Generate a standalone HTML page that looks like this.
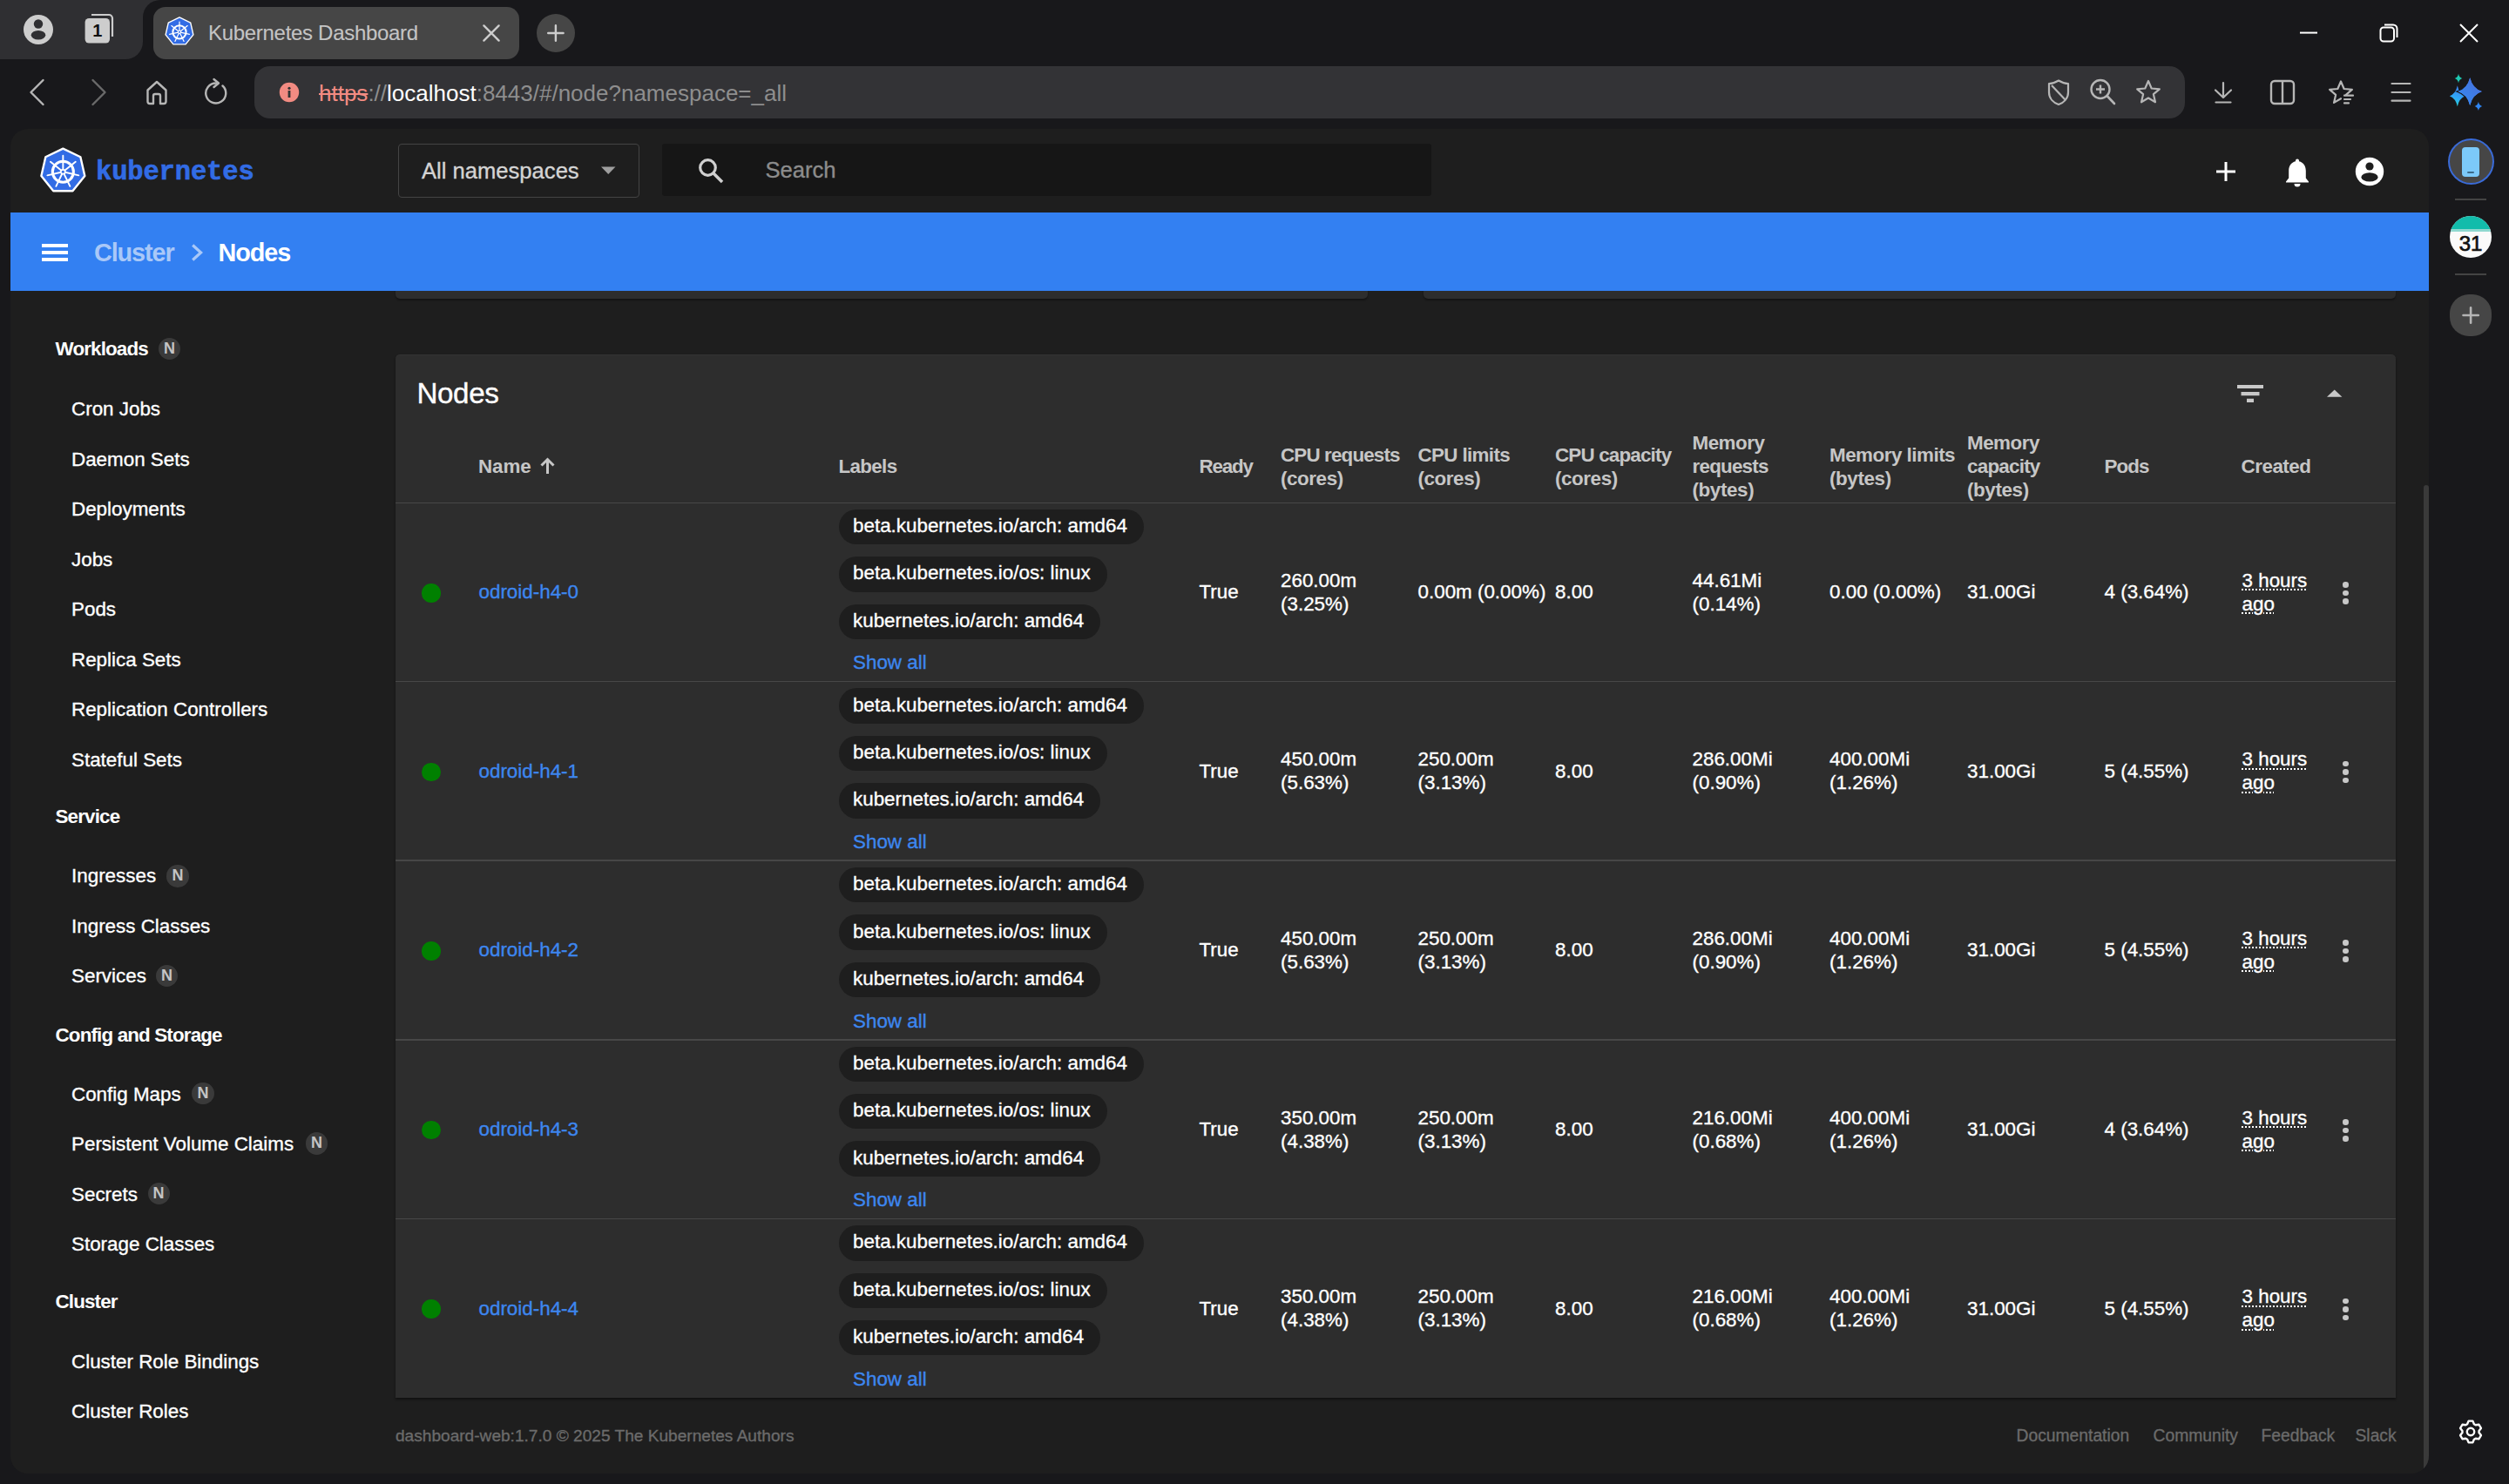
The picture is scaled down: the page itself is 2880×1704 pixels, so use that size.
<!DOCTYPE html>
<html><head><meta charset="utf-8"><title>Kubernetes Dashboard</title>
<style>
html,body{margin:0;padding:0;width:2880px;height:1704px;overflow:hidden;background:#18181b;}
body{position:relative;font-family:'Liberation Sans', sans-serif;}
.t{position:absolute;white-space:pre;line-height:1;}
.r{position:absolute;display:block;}
</style></head><body>
<div class="r" style="left:0.0px;top:0.0px;width:164.0px;height:68.0px;background:#2f2f32;border-bottom-right-radius:20px"></div>
<div class="r" style="left:150.0px;top:0.0px;width:40.0px;height:24.0px;background:#2f2f32;"></div>
<div class="r" style="left:164.0px;top:0.0px;width:60.0px;height:48.0px;background:#18181b;border-top-left-radius:20px"></div>
<svg class="r" style="left:26.0px;top:16.0px;" width="36" height="36" viewBox="0 0 36 36"><circle cx="18" cy="18" r="17" fill="#cdcdcd"/><circle cx="18" cy="11.5" r="5.2" fill="#2f2f32"/><ellipse cx="18" cy="24.3" rx="8.3" ry="5.2" fill="#2f2f32"/></svg>
<svg class="r" style="left:94.0px;top:12.0px;" width="40" height="40" viewBox="0 0 40 40"><path d="M11 5 H31 a4 4 0 0 1 4 4 V30" fill="none" stroke="#cdcdcd" stroke-width="2.2"/><rect x="3.6" y="9" width="28.4" height="28.5" rx="4.5" fill="#cdcdcd"/><text x="17.8" y="30.2" text-anchor="middle" font-family="Liberation Sans" style="font-weight:bold" font-size="20" fill="#111">1</text></svg>
<div class="r" style="left:176.0px;top:8.0px;width:420.0px;height:60.0px;background:#464646;border-radius:14px"></div>
<svg class="r" style="left:186.0px;top:16.0px;" width="40" height="40" viewBox="0 0 40 40"><path d="M20.00 3.90 L32.74 10.04 L35.89 23.83 L27.07 34.89 L12.93 34.89 L4.11 23.83 L7.26 10.04Z" fill="#326ce5" stroke="#fff" stroke-width="1.4" stroke-linejoin="round"/><circle cx="20.00" cy="20.85" r="7.66" fill="none" stroke="#fff" stroke-width="1.96"/><line x1="20.00" y1="20.85" x2="20.00" y2="9.12" stroke="#fff" stroke-width="1.22" stroke-linecap="round"/><line x1="20.00" y1="20.85" x2="29.18" y2="13.53" stroke="#fff" stroke-width="1.22" stroke-linecap="round"/><line x1="20.00" y1="20.85" x2="31.44" y2="23.46" stroke="#fff" stroke-width="1.22" stroke-linecap="round"/><line x1="20.00" y1="20.85" x2="25.09" y2="31.43" stroke="#fff" stroke-width="1.22" stroke-linecap="round"/><line x1="20.00" y1="20.85" x2="14.91" y2="31.43" stroke="#fff" stroke-width="1.22" stroke-linecap="round"/><line x1="20.00" y1="20.85" x2="8.56" y2="23.46" stroke="#fff" stroke-width="1.22" stroke-linecap="round"/><line x1="20.00" y1="20.85" x2="10.82" y2="13.53" stroke="#fff" stroke-width="1.22" stroke-linecap="round"/><circle cx="20.00" cy="20.85" r="2.12" fill="#fff"/><circle cx="20.00" cy="20.85" r="0.98" fill="#326ce5"/></svg>
<div class="t" style="left:239.0px;top:26.3px;font-size:24px;font-weight:400;color:#c4c4c4;letter-spacing:-0.3px;font-family:'Liberation Sans', sans-serif;-webkit-text-stroke-width:0.1px">Kubernetes Dashboard</div>
<svg class="r" style="left:550.0px;top:24.0px;" width="28" height="28" viewBox="0 0 28 28"><path d="M5.4 5.4 L22.6 22.6 M22.6 5.4 L5.4 22.6" stroke="#cccccc" stroke-width="2.4" stroke-linecap="round"/></svg>
<div class="r" style="left:615.5px;top:15.5px;width:44.8px;height:44.8px;background:#464646;border-radius:50%"></div>
<svg class="r" style="left:624.0px;top:24.0px;" width="28" height="28" viewBox="0 0 28 28"><path d="M13.9 5.2 V22.8 M5.2 14 H22.6" stroke="#cccccc" stroke-width="2.4" stroke-linecap="round"/></svg>
<svg class="r" style="left:2636.0px;top:30.0px;" width="28" height="16" viewBox="0 0 28 16"><path d="M4 7.6 H24" stroke="#fff" stroke-width="2"/></svg>
<svg class="r" style="left:2728.0px;top:24.0px;" width="28" height="28" viewBox="0 0 28 28"><rect x="4.5" y="7.5" width="15.5" height="16" rx="3.5" fill="none" stroke="#fff" stroke-width="2"/><path d="M9 4.5 H19 a4.5 4.5 0 0 1 4.5 4.5 V19" fill="none" stroke="#fff" stroke-width="2"/></svg>
<svg class="r" style="left:2820.0px;top:24.0px;" width="28" height="28" viewBox="0 0 28 28"><path d="M4 4 L24 24 M24 4 L4 24" stroke="#fff" stroke-width="2"/></svg>
<svg class="r" style="left:30.0px;top:88.0px;" width="26" height="36" viewBox="0 0 26 36"><path d="M19.5 4 L5.5 18 L19.5 32" fill="none" stroke="#b6b6b6" stroke-width="2.4" stroke-linecap="round" stroke-linejoin="round"/></svg>
<svg class="r" style="left:101.0px;top:88.0px;" width="26" height="36" viewBox="0 0 26 36"><path d="M5.5 4 L19.5 18 L5.5 32" fill="none" stroke="#6a6a6a" stroke-width="2.4" stroke-linecap="round" stroke-linejoin="round"/></svg>
<svg class="r" style="left:164.0px;top:89.0px;" width="32" height="34" viewBox="0 0 32 34"><path d="M5.5 14.5 L16 5 L26.5 14.5 V27.5 a2.5 2.5 0 0 1 -2.5 2.5 H20 V21 a2 2 0 0 0 -2 -2 H14 a2 2 0 0 0 -2 2 V30 H8 a2.5 2.5 0 0 1 -2.5 -2.5 Z" fill="none" stroke="#b6b6b6" stroke-width="2.4" stroke-linejoin="round"/></svg>
<svg class="r" style="left:230.0px;top:87.5px;" width="36" height="36" viewBox="0 0 36 36"><path d="M25.5 10.5 A11.5 11.5 0 1 1 18 7.5" fill="none" stroke="#b6b6b6" stroke-width="2.4" stroke-linecap="round"/><path d="M15.5 3 L21 7.5 L15.5 12" fill="none" stroke="#b6b6b6" stroke-width="2.4" stroke-linecap="round" stroke-linejoin="round"/></svg>
<div class="r" style="left:292.0px;top:76.0px;width:2216.0px;height:60.0px;background:#333336;border-radius:18px"></div>
<svg class="r" style="left:320.0px;top:94.0px;" width="24" height="24" viewBox="0 0 24 24"><circle cx="12" cy="12" r="11.2" fill="#f28b82"/><circle cx="12" cy="7.3" r="1.6" fill="#333"/><rect x="10.6" y="10" width="2.8" height="8" fill="#333"/></svg>
<div class="t" style="left:366px;top:94.3px;font-size:26px;color:#8e8e8e"><span style="color:#f28b82;text-decoration:line-through;text-decoration-thickness:2px">https</span>://<span style="color:#fff">localhost</span>:8443/#/node?namespace=_all</div>
<svg class="r" style="left:2346.0px;top:88.0px;" width="34" height="36" viewBox="0 0 34 36"><path d="M17 4.5 C12 7.5 8.5 8 6 8 V18 C6 25 11 30 17 32 C23 30 28 25 28 18 V8 C25.5 8 22 7.5 17 4.5 Z" fill="none" stroke="#b6b6b6" stroke-width="2.2" stroke-linejoin="round"/><path d="M9 10 L25 27" stroke="#b6b6b6" stroke-width="2.2"/></svg>
<svg class="r" style="left:2396.0px;top:88.0px;" width="36" height="36" viewBox="0 0 36 36"><circle cx="15" cy="14.5" r="10.5" fill="none" stroke="#b6b6b6" stroke-width="2.4"/><path d="M22.5 22 L31 31" stroke="#b6b6b6" stroke-width="2.6" stroke-linecap="round"/><path d="M15 9.5 V19.5 M10 14.5 H20" stroke="#b6b6b6" stroke-width="2.4"/></svg>
<svg class="r" style="left:2448.0px;top:88.0px;" width="36" height="36" viewBox="0 0 36 36"><path d="M18 5 L21.7 13.5 L30.8 14.3 L23.9 20.2 L26 29.3 L18 24.5 L10 29.3 L12.1 20.2 L5.2 14.3 L14.3 13.5 Z" fill="none" stroke="#b6b6b6" stroke-width="2.2" stroke-linejoin="round"/></svg>
<svg class="r" style="left:2536.0px;top:90.0px;" width="32" height="32" viewBox="0 0 32 32"><path d="M16 5 V21 M7 13.5 L16 22 L25 13.5" fill="none" stroke="#b6b6b6" stroke-width="2.2" stroke-linecap="round" stroke-linejoin="round"/><path d="M7.5 27.5 H24.5" stroke="#b6b6b6" stroke-width="2.2" stroke-linecap="round"/></svg>
<svg class="r" style="left:2602.0px;top:88.0px;" width="36" height="36" viewBox="0 0 36 36"><rect x="5" y="5" width="26" height="26" rx="4" fill="none" stroke="#b6b6b6" stroke-width="2.4"/><path d="M18 5 V31" stroke="#b6b6b6" stroke-width="2.4"/></svg>
<svg class="r" style="left:2670.0px;top:88.0px;" width="36" height="36" viewBox="0 0 36 36"><path d="M17.00 25.20 L9.06 29.92 L11.10 20.92 L4.16 14.83 L13.36 13.98 L17.00 5.50 L20.64 13.98 L29.84 14.83 L22.90 20.92" fill="none" stroke="#b6b6b6" stroke-width="2.2" stroke-linejoin="round" stroke-linecap="round"/><path d="M21 21.7 H31 M21 26 H28 M21 30.4 H26" stroke="#b6b6b6" stroke-width="2.2" stroke-linecap="round"/></svg>
<svg class="r" style="left:2740.0px;top:90.0px;" width="32" height="32" viewBox="0 0 32 32"><path d="M5.5 6 H26.5 M5.5 16 H26.5 M5.5 25.7 H26.5" stroke="#b6b6b6" stroke-width="2.2" stroke-linecap="round"/></svg>
<svg class="r" style="left:2806.0px;top:80.0px;" width="50" height="50" viewBox="0 0 50 50"><defs><linearGradient id="cg1" x1="0" y1="1" x2="0.3" y2="0"><stop offset="0" stop-color="#22e0c8"/><stop offset="0.5" stop-color="#2fa8f8"/><stop offset="1" stop-color="#3b82f0"/></linearGradient><linearGradient id="cg2" x1="0" y1="1" x2="1" y2="0"><stop offset="0" stop-color="#338cf5"/><stop offset="1" stop-color="#4a6cd8"/></linearGradient></defs><path d="M14.80 18.20 Q16.78 27.56 23.80 30.20 Q16.78 32.84 14.80 42.20 Q12.82 32.84 5.80 30.20 Q12.82 27.56 14.80 18.20Z" fill="url(#cg1)"/><path d="M29.20 9.20 Q32.21 21.60 42.90 25.10 Q32.21 28.60 29.20 41.00 Q26.19 28.60 15.50 25.10 Q26.19 21.60 29.20 9.20Z" fill="url(#cg2)" stroke="#18181b" stroke-width="2.2" paint-order="stroke"/><path d="M29.20 9.20 Q32.21 21.60 42.90 25.10 Q32.21 28.60 29.20 41.00 Q26.19 28.60 15.50 25.10 Q26.19 21.60 29.20 9.20Z" fill="url(#cg2)"/><path d="M16.00 4.80 Q16.86 8.96 20.30 10.00 Q16.86 11.04 16.00 15.20 Q15.14 11.04 11.70 10.00 Q15.14 8.96 16.00 4.80Z" fill="#1fc9b3"/><path d="M38.90 36.70 Q39.76 40.86 43.20 41.90 Q39.76 42.94 38.90 47.10 Q38.04 42.94 34.60 41.90 Q38.04 40.86 38.90 36.70Z" fill="#2f86f5"/></svg>
<div class="r" style="left:2811.5px;top:161.0px;width:49.0px;height:49.0px;background:#464646;border-radius:50%;box-shadow:0 0 0 2px #3a6bd8"></div>
<div class="r" style="left:2826.0px;top:169.0px;width:19.6px;height:33.8px;background:#7cc9f9;border-radius:4px"></div>
<div class="r" style="left:2832.0px;top:197.0px;width:8.0px;height:2.0px;background:#3b6a8a;border-radius:1px"></div>
<div class="r" style="left:2818.0px;top:228.0px;width:36.0px;height:2.0px;background:#444;"></div>
<div class="r" style="left:2812px;top:248px;width:48px;height:48px;border-radius:50%;overflow:hidden;background:#fafafa"><div style="position:absolute;left:0;top:0;width:48px;height:15px;background:#12bcab"></div><div style="position:absolute;left:0;top:15px;width:48px;height:3px;background:#8fd8d0"></div><div style="position:absolute;left:0;top:19.5px;width:48px;text-align:center;font-family:'Liberation Sans';font-weight:400;font-size:24px;line-height:24px;color:#111;letter-spacing:0px;-webkit-text-stroke:0.7px #111">31</div></div>
<div class="r" style="left:2818.0px;top:314.0px;width:36.0px;height:2.0px;background:#444;"></div>
<div class="r" style="left:2812.0px;top:338.0px;width:48.0px;height:48.0px;background:#464646;border-radius:22px"></div>
<svg class="r" style="left:2822.0px;top:348.0px;" width="28" height="28" viewBox="0 0 28 28"><path d="M14.1 5.3 V22.7 M5.5 14 H22.8" stroke="#b4b4b4" stroke-width="2.6" stroke-linecap="round"/></svg>
<svg class="r" style="left:2818.0px;top:1626.0px;" width="36" height="36" viewBox="0 0 36 36"><path d="M14.10 9.23 L15.60 5.63 L20.40 5.63 L21.90 9.23 L23.64 10.23 L27.51 9.73 L29.91 13.90 L27.55 17.00 L27.55 19.00 L29.91 22.10 L27.51 26.27 L23.64 25.77 L21.90 26.77 L20.40 30.37 L15.60 30.37 L14.10 26.77 L12.36 25.77 L8.49 26.27 L6.09 22.10 L8.45 19.00 L8.45 17.00 L6.09 13.90 L8.49 9.73 L12.36 10.23Z" fill="none" stroke="#fff" stroke-width="2.4" stroke-linejoin="round"/><circle cx="18" cy="18" r="4.2" fill="none" stroke="#fff" stroke-width="2.4"/></svg>
<div class="r" style="left:12.0px;top:148.0px;width:2776.0px;height:1544.0px;background:#1e1e1e;border-radius:20px"></div>
<div class="r" style="left:2748px;top:540px;width:40px;height:1152px;overflow:hidden;border-bottom-right-radius:20px"><div style="position:absolute;left:34px;top:17px;width:6px;height:1200px;background:#3a3a3a;border-radius:3px 3px 0 0"></div></div>
<svg class="r" style="left:42.0px;top:165.0px;" width="62" height="62" viewBox="0 0 62 62"><path d="M30.35 5.60 L50.36 15.24 L55.31 36.90 L41.46 54.26 L19.24 54.26 L5.39 36.90 L10.34 15.24Z" fill="#326ce5" stroke="#fff" stroke-width="2.4" stroke-linejoin="round"/><circle cx="30.35" cy="32.22" r="12.03" fill="none" stroke="#fff" stroke-width="3.07"/><line x1="30.35" y1="32.22" x2="30.35" y2="13.79" stroke="#fff" stroke-width="1.92" stroke-linecap="round"/><line x1="30.35" y1="32.22" x2="44.76" y2="20.73" stroke="#fff" stroke-width="1.92" stroke-linecap="round"/><line x1="30.35" y1="32.22" x2="48.32" y2="36.33" stroke="#fff" stroke-width="1.92" stroke-linecap="round"/><line x1="30.35" y1="32.22" x2="38.35" y2="48.83" stroke="#fff" stroke-width="1.92" stroke-linecap="round"/><line x1="30.35" y1="32.22" x2="22.35" y2="48.83" stroke="#fff" stroke-width="1.92" stroke-linecap="round"/><line x1="30.35" y1="32.22" x2="12.38" y2="36.33" stroke="#fff" stroke-width="1.92" stroke-linecap="round"/><line x1="30.35" y1="32.22" x2="15.94" y2="20.73" stroke="#fff" stroke-width="1.92" stroke-linecap="round"/><circle cx="30.35" cy="32.22" r="3.33" fill="#fff"/><circle cx="30.35" cy="32.22" r="1.54" fill="#326ce5"/></svg>
<div class="t" style="left:110.0px;top:182.8px;font-size:30.5px;font-weight:700;color:#326ce5;letter-spacing:-0.15px;font-family:'Liberation Mono', monospace;transform:scaleY(1.04);transform-origin:0 80%;-webkit-text-stroke:0.6px #326ce5">kubernetes</div>
<div class="r" style="left:457.0px;top:165.0px;width:277.0px;height:61.5px;background:transparent;border:1.4px solid #444;border-radius:4px;box-sizing:border-box"></div>
<div class="t" style="left:484.0px;top:184.0px;font-size:25.6px;font-weight:400;color:#d4d4d4;letter-spacing:0px;font-family:'Liberation Sans', sans-serif;-webkit-text-stroke-width:0.35px;">All namespaces</div>
<svg class="r" style="left:686.0px;top:188.0px;" width="24" height="16" viewBox="0 0 24 16"><path d="M4 3.5 L20.5 3.5 L12.25 12 Z" fill="#9e9e9e"/></svg>
<div class="r" style="left:760.0px;top:165.0px;width:883.0px;height:60.0px;background:#161616;border-radius:3px"></div>
<svg class="r" style="left:798.0px;top:178.0px;" width="36" height="36" viewBox="0 0 36 36"><circle cx="14.5" cy="14.5" r="8.8" fill="none" stroke="#d0d0d0" stroke-width="3.2"/><path d="M21 21 L31 31" stroke="#d0d0d0" stroke-width="3.6"/></svg>
<div class="t" style="left:878.5px;top:183.3px;font-size:25.6px;font-weight:400;color:#8c8c8c;letter-spacing:0px;font-family:'Liberation Sans', sans-serif;-webkit-text-stroke-width:0.35px;">Search</div>
<svg class="r" style="left:2539.0px;top:181.0px;" width="32" height="32" viewBox="0 0 32 32"><path d="M16 5 V27 M5 16 H27" stroke="#fff" stroke-width="3"/></svg>
<svg class="r" style="left:2619.0px;top:179.0px;" width="36" height="36" viewBox="0 0 36 36"><path d="M18 3.5 a2 2 0 0 1 2 2 V6.3 C25 7.5 27.8 11.5 27.8 17 V25.5 L31 29.5 V30.5 H5 V29.5 L8.2 25.5 V17 C8.2 11.5 11 7.5 16 6.3 V5.5 a2 2 0 0 1 2 -2 Z" fill="#fff"/><path d="M14.5 32 H21.5 a3.5 3.5 0 0 1 -7 0Z" fill="#fff"/></svg>
<svg class="r" style="left:2702.0px;top:179.0px;" width="36" height="36" viewBox="0 0 36 36"><circle cx="18" cy="18" r="16.2" fill="#fff"/><circle cx="18" cy="12" r="4.6" fill="#1e1e1e"/><ellipse cx="18" cy="24.4" rx="9.6" ry="5.2" fill="#1e1e1e"/></svg>
<div class="r" style="left:454.0px;top:320.0px;width:1116.0px;height:23.0px;background:#2d2d2d;border-radius:0 0 5px 5px;box-shadow:0 2px 2px rgba(0,0,0,.35)"></div>
<div class="r" style="left:1634.0px;top:320.0px;width:1116.0px;height:23.0px;background:#2d2d2d;border-radius:0 0 5px 5px;box-shadow:0 2px 2px rgba(0,0,0,.35)"></div>
<div class="r" style="left:12.0px;top:244.0px;width:2776.0px;height:90.0px;background:#3380f2;"></div>
<div class="r" style="left:48.0px;top:280.0px;width:29.5px;height:3.8px;background:#fff;"></div>
<div class="r" style="left:48.0px;top:288.1px;width:29.5px;height:3.8px;background:#fff;"></div>
<div class="r" style="left:48.0px;top:296.0px;width:29.5px;height:3.8px;background:#fff;"></div>
<div class="t" style="left:108.0px;top:275.8px;font-size:28.8px;font-weight:700;color:#a9c8f8;letter-spacing:-1.1px;font-family:'Liberation Sans', sans-serif;">Cluster</div>
<svg class="r" style="left:214.0px;top:278.0px;" width="24" height="24" viewBox="0 0 24 24"><path d="M7.2 3.5 L16.6 12 L7.2 20.5" fill="none" stroke="#a9c8f8" stroke-width="3.2"/></svg>
<div class="t" style="left:250.6px;top:275.8px;font-size:28.8px;font-weight:700;color:#fff;letter-spacing:-1.1px;font-family:'Liberation Sans', sans-serif;">Nodes</div>
<div class="t" style="left:63.5px;top:390.4px;font-size:22.4px;font-weight:700;color:#fff;letter-spacing:-0.85px;font-family:'Liberation Sans', sans-serif;">Workloads</div>
<div class="r" style="left:181.9px;top:388.3px;width:25.2px;height:25.2px;background:#3a3a3a;border-radius:50%"></div>
<div class="t" style="left:181.9px;top:388.3px;width:25.2px;line-height:25.2px;text-align:center;font-size:18px;font-weight:700;color:#c4c4c4">N</div>
<div class="t" style="left:82.0px;top:458.9px;font-size:22.4px;font-weight:400;color:#fff;letter-spacing:0px;font-family:'Liberation Sans', sans-serif;-webkit-text-stroke-width:0.35px;">Cron Jobs</div>
<div class="t" style="left:82.0px;top:517.2px;font-size:22.4px;font-weight:400;color:#fff;letter-spacing:0px;font-family:'Liberation Sans', sans-serif;-webkit-text-stroke-width:0.35px;">Daemon Sets</div>
<div class="t" style="left:82.0px;top:574.3px;font-size:22.4px;font-weight:400;color:#fff;letter-spacing:0px;font-family:'Liberation Sans', sans-serif;-webkit-text-stroke-width:0.35px;">Deployments</div>
<div class="t" style="left:82.0px;top:631.8px;font-size:22.4px;font-weight:400;color:#fff;letter-spacing:0px;font-family:'Liberation Sans', sans-serif;-webkit-text-stroke-width:0.35px;">Jobs</div>
<div class="t" style="left:82.0px;top:689.2px;font-size:22.4px;font-weight:400;color:#fff;letter-spacing:0px;font-family:'Liberation Sans', sans-serif;-webkit-text-stroke-width:0.35px;">Pods</div>
<div class="t" style="left:82.0px;top:746.6px;font-size:22.4px;font-weight:400;color:#fff;letter-spacing:0px;font-family:'Liberation Sans', sans-serif;-webkit-text-stroke-width:0.35px;">Replica Sets</div>
<div class="t" style="left:82.0px;top:804.0px;font-size:22.4px;font-weight:400;color:#fff;letter-spacing:0px;font-family:'Liberation Sans', sans-serif;-webkit-text-stroke-width:0.35px;">Replication Controllers</div>
<div class="t" style="left:82.0px;top:861.6px;font-size:22.4px;font-weight:400;color:#fff;letter-spacing:0px;font-family:'Liberation Sans', sans-serif;-webkit-text-stroke-width:0.35px;">Stateful Sets</div>
<div class="t" style="left:63.5px;top:926.9px;font-size:22.4px;font-weight:700;color:#fff;letter-spacing:-0.85px;font-family:'Liberation Sans', sans-serif;">Service</div>
<div class="t" style="left:82.0px;top:995.2px;font-size:22.4px;font-weight:400;color:#fff;letter-spacing:0px;font-family:'Liberation Sans', sans-serif;-webkit-text-stroke-width:0.35px;">Ingresses</div>
<div class="r" style="left:191.4px;top:993.4px;width:25.2px;height:25.2px;background:#3a3a3a;border-radius:50%"></div>
<div class="t" style="left:191.4px;top:993.4px;width:25.2px;line-height:25.2px;text-align:center;font-size:18px;font-weight:700;color:#c4c4c4">N</div>
<div class="t" style="left:82.0px;top:1053.1px;font-size:22.4px;font-weight:400;color:#fff;letter-spacing:0px;font-family:'Liberation Sans', sans-serif;-webkit-text-stroke-width:0.35px;">Ingress Classes</div>
<div class="t" style="left:82.0px;top:1110.4px;font-size:22.4px;font-weight:400;color:#fff;letter-spacing:0px;font-family:'Liberation Sans', sans-serif;-webkit-text-stroke-width:0.35px;">Services</div>
<div class="r" style="left:179.0px;top:1108.3px;width:25.2px;height:25.2px;background:#3a3a3a;border-radius:50%"></div>
<div class="t" style="left:179.0px;top:1108.3px;width:25.2px;line-height:25.2px;text-align:center;font-size:18px;font-weight:700;color:#c4c4c4">N</div>
<div class="t" style="left:63.5px;top:1177.7px;font-size:22.4px;font-weight:700;color:#fff;letter-spacing:-0.85px;font-family:'Liberation Sans', sans-serif;">Config and Storage</div>
<div class="t" style="left:82.0px;top:1246.0px;font-size:22.4px;font-weight:400;color:#fff;letter-spacing:0px;font-family:'Liberation Sans', sans-serif;-webkit-text-stroke-width:0.35px;">Config Maps</div>
<div class="r" style="left:220.4px;top:1242.8px;width:25.2px;height:25.2px;background:#3a3a3a;border-radius:50%"></div>
<div class="t" style="left:220.4px;top:1242.8px;width:25.2px;line-height:25.2px;text-align:center;font-size:18px;font-weight:700;color:#c4c4c4">N</div>
<div class="t" style="left:82.0px;top:1303.2px;font-size:22.4px;font-weight:400;color:#fff;letter-spacing:0px;font-family:'Liberation Sans', sans-serif;-webkit-text-stroke-width:0.35px;">Persistent Volume Claims</div>
<div class="r" style="left:350.8px;top:1300.4px;width:25.2px;height:25.2px;background:#3a3a3a;border-radius:50%"></div>
<div class="t" style="left:350.8px;top:1300.4px;width:25.2px;line-height:25.2px;text-align:center;font-size:18px;font-weight:700;color:#c4c4c4">N</div>
<div class="t" style="left:82.0px;top:1360.8px;font-size:22.4px;font-weight:400;color:#fff;letter-spacing:0px;font-family:'Liberation Sans', sans-serif;-webkit-text-stroke-width:0.35px;">Secrets</div>
<div class="r" style="left:169.5px;top:1358.0px;width:25.2px;height:25.2px;background:#3a3a3a;border-radius:50%"></div>
<div class="t" style="left:169.5px;top:1358.0px;width:25.2px;line-height:25.2px;text-align:center;font-size:18px;font-weight:700;color:#c4c4c4">N</div>
<div class="t" style="left:82.0px;top:1418.0px;font-size:22.4px;font-weight:400;color:#fff;letter-spacing:0px;font-family:'Liberation Sans', sans-serif;-webkit-text-stroke-width:0.35px;">Storage Classes</div>
<div class="t" style="left:63.5px;top:1484.2px;font-size:22.4px;font-weight:700;color:#fff;letter-spacing:-0.85px;font-family:'Liberation Sans', sans-serif;">Cluster</div>
<div class="t" style="left:82.0px;top:1552.7px;font-size:22.4px;font-weight:400;color:#fff;letter-spacing:0px;font-family:'Liberation Sans', sans-serif;-webkit-text-stroke-width:0.35px;">Cluster Role Bindings</div>
<div class="t" style="left:82.0px;top:1609.8px;font-size:22.4px;font-weight:400;color:#fff;letter-spacing:0px;font-family:'Liberation Sans', sans-serif;-webkit-text-stroke-width:0.35px;">Cluster Roles</div>
<div class="r" style="left:454.0px;top:407.0px;width:2296.0px;height:1198.0px;background:#2d2d2d;border-radius:5px 5px 0 0;box-shadow:0 2px 3px rgba(0,0,0,.45), inset 0 1px 0 rgba(255,255,255,.03)"></div>
<div class="t" style="left:478.5px;top:434.9px;font-size:33.2px;font-weight:400;color:#fff;letter-spacing:-0.4px;font-family:'Liberation Sans', sans-serif;-webkit-text-stroke-width:0.35px;">Nodes</div>
<svg class="r" style="left:2564.0px;top:436.0px;" width="38" height="32" viewBox="0 0 38 32"><path d="M4 8 H34 M8.5 16.2 H29.5 M15 23.8 H23" stroke="#c8c8c8" stroke-width="4.2"/></svg>
<svg class="r" style="left:2666.0px;top:440.0px;" width="28" height="20" viewBox="0 0 28 20"><path d="M5 15.8 L13.7 7.4 L22.4 15.8 Z" fill="#c8c8c8"/></svg>
<div class="t" style="left:549.0px;top:525.3px;font-size:22.4px;font-weight:700;color:#c6c6c6;letter-spacing:-0.1px;font-family:'Liberation Sans', sans-serif;">Name</div>
<svg class="r" style="left:616.0px;top:522.0px;" width="26" height="26" viewBox="0 0 26 26"><path d="M12.5 22 V6 M5.5 12.5 L12.5 5.5 L19.5 12.5" fill="none" stroke="#c6c6c6" stroke-width="3"/></svg>
<div class="t" style="left:962.5px;top:525.3px;font-size:22.4px;font-weight:700;color:#c6c6c6;letter-spacing:-0.66px;font-family:'Liberation Sans', sans-serif;">Labels</div>
<div class="t" style="left:1376.5px;top:525.3px;font-size:22.4px;font-weight:700;color:#c6c6c6;letter-spacing:-1.2px;font-family:'Liberation Sans', sans-serif;">Ready</div>
<div class="t" style="left:1470.0px;top:511.8px;font-size:22.4px;font-weight:700;color:#c6c6c6;letter-spacing:-0.85px;font-family:'Liberation Sans', sans-serif;">CPU requests</div>
<div class="t" style="left:1470.0px;top:538.8px;font-size:22.4px;font-weight:700;color:#c6c6c6;letter-spacing:-0.42px;font-family:'Liberation Sans', sans-serif;">(cores)</div>
<div class="t" style="left:1627.5px;top:511.8px;font-size:22.4px;font-weight:700;color:#c6c6c6;letter-spacing:-0.64px;font-family:'Liberation Sans', sans-serif;">CPU limits</div>
<div class="t" style="left:1627.5px;top:538.8px;font-size:22.4px;font-weight:700;color:#c6c6c6;letter-spacing:-0.42px;font-family:'Liberation Sans', sans-serif;">(cores)</div>
<div class="t" style="left:1785.0px;top:511.8px;font-size:22.4px;font-weight:700;color:#c6c6c6;letter-spacing:-0.82px;font-family:'Liberation Sans', sans-serif;">CPU capacity</div>
<div class="t" style="left:1785.0px;top:538.8px;font-size:22.4px;font-weight:700;color:#c6c6c6;letter-spacing:-0.42px;font-family:'Liberation Sans', sans-serif;">(cores)</div>
<div class="t" style="left:1942.5px;top:498.3px;font-size:22.4px;font-weight:700;color:#c6c6c6;letter-spacing:-0.5px;font-family:'Liberation Sans', sans-serif;">Memory</div>
<div class="t" style="left:1942.5px;top:525.3px;font-size:22.4px;font-weight:700;color:#c6c6c6;letter-spacing:-0.77px;font-family:'Liberation Sans', sans-serif;">requests</div>
<div class="t" style="left:1942.5px;top:552.3px;font-size:22.4px;font-weight:700;color:#c6c6c6;letter-spacing:-0.38px;font-family:'Liberation Sans', sans-serif;">(bytes)</div>
<div class="t" style="left:2100.0px;top:511.8px;font-size:22.4px;font-weight:700;color:#c6c6c6;letter-spacing:-0.5px;font-family:'Liberation Sans', sans-serif;">Memory limits</div>
<div class="t" style="left:2100.0px;top:538.8px;font-size:22.4px;font-weight:700;color:#c6c6c6;letter-spacing:-0.38px;font-family:'Liberation Sans', sans-serif;">(bytes)</div>
<div class="t" style="left:2258.0px;top:498.3px;font-size:22.4px;font-weight:700;color:#c6c6c6;letter-spacing:-0.5px;font-family:'Liberation Sans', sans-serif;">Memory</div>
<div class="t" style="left:2258.0px;top:525.3px;font-size:22.4px;font-weight:700;color:#c6c6c6;letter-spacing:-0.76px;font-family:'Liberation Sans', sans-serif;">capacity</div>
<div class="t" style="left:2258.0px;top:552.3px;font-size:22.4px;font-weight:700;color:#c6c6c6;letter-spacing:-0.38px;font-family:'Liberation Sans', sans-serif;">(bytes)</div>
<div class="t" style="left:2415.5px;top:525.3px;font-size:22.4px;font-weight:700;color:#c6c6c6;letter-spacing:-0.9px;font-family:'Liberation Sans', sans-serif;">Pods</div>
<div class="t" style="left:2572.5px;top:525.3px;font-size:22.4px;font-weight:700;color:#c6c6c6;letter-spacing:-0.48px;font-family:'Liberation Sans', sans-serif;">Created</div>
<div class="r" style="left:454.0px;top:576.6px;width:2296.0px;height:1.6px;background:#474747;"></div>
<div class="r" style="left:454.0px;top:781.8px;width:2296.0px;height:1.6px;background:#474747;"></div>
<div class="r" style="left:484.4px;top:669.9px;width:21.7px;height:21.7px;background:#008000;border-radius:50%"></div>
<div class="t" style="left:549.5px;top:669.1px;font-size:22.4px;font-weight:400;color:#3d87f0;letter-spacing:0px;font-family:'Liberation Sans', sans-serif;-webkit-text-stroke-width:0.35px;">odroid-h4-0</div>
<div class="r" style="left:963.0px;top:584.7px;width:349.6px;height:40.6px;background:#1e1e1e;border-radius:20.3px"></div>
<div class="t" style="left:979.0px;top:593.0px;font-size:22.4px;font-weight:400;color:#fff;letter-spacing:0px;font-family:'Liberation Sans', sans-serif;-webkit-text-stroke-width:0.35px;">beta.kubernetes.io/arch: amd64</div>
<div class="r" style="left:963.0px;top:639.1px;width:307.7px;height:40.6px;background:#1e1e1e;border-radius:20.3px"></div>
<div class="t" style="left:979.0px;top:647.4px;font-size:22.4px;font-weight:400;color:#fff;letter-spacing:0px;font-family:'Liberation Sans', sans-serif;-webkit-text-stroke-width:0.35px;">beta.kubernetes.io/os: linux</div>
<div class="r" style="left:963.0px;top:693.5px;width:299.5px;height:40.6px;background:#1e1e1e;border-radius:20.3px"></div>
<div class="t" style="left:979.0px;top:701.8px;font-size:22.4px;font-weight:400;color:#fff;letter-spacing:0px;font-family:'Liberation Sans', sans-serif;-webkit-text-stroke-width:0.35px;">kubernetes.io/arch: amd64</div>
<div class="t" style="left:979.0px;top:750.3px;font-size:22.4px;font-weight:400;color:#3d87f0;letter-spacing:0px;font-family:'Liberation Sans', sans-serif;-webkit-text-stroke-width:0.35px;">Show all</div>
<div class="t" style="left:1376.5px;top:669.2px;font-size:22.4px;font-weight:400;color:#fff;letter-spacing:0px;font-family:'Liberation Sans', sans-serif;-webkit-text-stroke-width:0.35px;">True</div>
<div class="t" style="left:1470.0px;top:655.7px;font-size:22.4px;font-weight:400;color:#fff;letter-spacing:0px;font-family:'Liberation Sans', sans-serif;-webkit-text-stroke-width:0.35px;">260.00m</div>
<div class="t" style="left:1470.0px;top:682.7px;font-size:22.4px;font-weight:400;color:#fff;letter-spacing:0px;font-family:'Liberation Sans', sans-serif;-webkit-text-stroke-width:0.35px;">(3.25%)</div>
<div class="t" style="left:1627.5px;top:669.2px;font-size:22.4px;font-weight:400;color:#fff;letter-spacing:0px;font-family:'Liberation Sans', sans-serif;-webkit-text-stroke-width:0.35px;">0.00m (0.00%)</div>
<div class="t" style="left:1785.0px;top:669.2px;font-size:22.4px;font-weight:400;color:#fff;letter-spacing:0px;font-family:'Liberation Sans', sans-serif;-webkit-text-stroke-width:0.35px;">8.00</div>
<div class="t" style="left:1942.5px;top:655.7px;font-size:22.4px;font-weight:400;color:#fff;letter-spacing:0px;font-family:'Liberation Sans', sans-serif;-webkit-text-stroke-width:0.35px;">44.61Mi</div>
<div class="t" style="left:1942.5px;top:682.7px;font-size:22.4px;font-weight:400;color:#fff;letter-spacing:0px;font-family:'Liberation Sans', sans-serif;-webkit-text-stroke-width:0.35px;">(0.14%)</div>
<div class="t" style="left:2100.0px;top:669.2px;font-size:22.4px;font-weight:400;color:#fff;letter-spacing:0px;font-family:'Liberation Sans', sans-serif;-webkit-text-stroke-width:0.35px;">0.00 (0.00%)</div>
<div class="t" style="left:2258.0px;top:669.2px;font-size:22.4px;font-weight:400;color:#fff;letter-spacing:0px;font-family:'Liberation Sans', sans-serif;-webkit-text-stroke-width:0.35px;">31.00Gi</div>
<div class="t" style="left:2415.5px;top:669.2px;font-size:22.4px;font-weight:400;color:#fff;letter-spacing:0px;font-family:'Liberation Sans', sans-serif;-webkit-text-stroke-width:0.35px;">4 (3.64%)</div>
<div class="t" style="left:2573.5px;top:655.7px;font-size:22.4px;font-weight:400;color:#fff;letter-spacing:0px;font-family:'Liberation Sans', sans-serif;-webkit-text-stroke-width:0.35px;text-decoration:underline dotted;text-underline-offset:2.5px;text-decoration-thickness:2px">3 hours</div>
<div class="t" style="left:2573.5px;top:682.7px;font-size:22.4px;font-weight:400;color:#fff;letter-spacing:0px;font-family:'Liberation Sans', sans-serif;-webkit-text-stroke-width:0.35px;text-decoration:underline dotted;text-underline-offset:2.5px;text-decoration-thickness:2px">ago</div>
<div class="r" style="left:2689.2px;top:668.2px;width:6.6px;height:6.6px;background:#c8c8c8;border-radius:50%"></div>
<div class="r" style="left:2689.2px;top:677.7px;width:6.6px;height:6.6px;background:#c8c8c8;border-radius:50%"></div>
<div class="r" style="left:2689.2px;top:687.2px;width:6.6px;height:6.6px;background:#c8c8c8;border-radius:50%"></div>
<div class="r" style="left:454.0px;top:987.4px;width:2296.0px;height:1.6px;background:#474747;"></div>
<div class="r" style="left:484.4px;top:875.5px;width:21.7px;height:21.7px;background:#008000;border-radius:50%"></div>
<div class="t" style="left:549.5px;top:874.7px;font-size:22.4px;font-weight:400;color:#3d87f0;letter-spacing:0px;font-family:'Liberation Sans', sans-serif;-webkit-text-stroke-width:0.35px;">odroid-h4-1</div>
<div class="r" style="left:963.0px;top:790.3px;width:349.6px;height:40.6px;background:#1e1e1e;border-radius:20.3px"></div>
<div class="t" style="left:979.0px;top:798.6px;font-size:22.4px;font-weight:400;color:#fff;letter-spacing:0px;font-family:'Liberation Sans', sans-serif;-webkit-text-stroke-width:0.35px;">beta.kubernetes.io/arch: amd64</div>
<div class="r" style="left:963.0px;top:844.7px;width:307.7px;height:40.6px;background:#1e1e1e;border-radius:20.3px"></div>
<div class="t" style="left:979.0px;top:853.0px;font-size:22.4px;font-weight:400;color:#fff;letter-spacing:0px;font-family:'Liberation Sans', sans-serif;-webkit-text-stroke-width:0.35px;">beta.kubernetes.io/os: linux</div>
<div class="r" style="left:963.0px;top:899.1px;width:299.5px;height:40.6px;background:#1e1e1e;border-radius:20.3px"></div>
<div class="t" style="left:979.0px;top:907.4px;font-size:22.4px;font-weight:400;color:#fff;letter-spacing:0px;font-family:'Liberation Sans', sans-serif;-webkit-text-stroke-width:0.35px;">kubernetes.io/arch: amd64</div>
<div class="t" style="left:979.0px;top:955.9px;font-size:22.4px;font-weight:400;color:#3d87f0;letter-spacing:0px;font-family:'Liberation Sans', sans-serif;-webkit-text-stroke-width:0.35px;">Show all</div>
<div class="t" style="left:1376.5px;top:874.8px;font-size:22.4px;font-weight:400;color:#fff;letter-spacing:0px;font-family:'Liberation Sans', sans-serif;-webkit-text-stroke-width:0.35px;">True</div>
<div class="t" style="left:1470.0px;top:861.3px;font-size:22.4px;font-weight:400;color:#fff;letter-spacing:0px;font-family:'Liberation Sans', sans-serif;-webkit-text-stroke-width:0.35px;">450.00m</div>
<div class="t" style="left:1470.0px;top:888.3px;font-size:22.4px;font-weight:400;color:#fff;letter-spacing:0px;font-family:'Liberation Sans', sans-serif;-webkit-text-stroke-width:0.35px;">(5.63%)</div>
<div class="t" style="left:1627.5px;top:861.3px;font-size:22.4px;font-weight:400;color:#fff;letter-spacing:0px;font-family:'Liberation Sans', sans-serif;-webkit-text-stroke-width:0.35px;">250.00m</div>
<div class="t" style="left:1627.5px;top:888.3px;font-size:22.4px;font-weight:400;color:#fff;letter-spacing:0px;font-family:'Liberation Sans', sans-serif;-webkit-text-stroke-width:0.35px;">(3.13%)</div>
<div class="t" style="left:1785.0px;top:874.8px;font-size:22.4px;font-weight:400;color:#fff;letter-spacing:0px;font-family:'Liberation Sans', sans-serif;-webkit-text-stroke-width:0.35px;">8.00</div>
<div class="t" style="left:1942.5px;top:861.3px;font-size:22.4px;font-weight:400;color:#fff;letter-spacing:0px;font-family:'Liberation Sans', sans-serif;-webkit-text-stroke-width:0.35px;">286.00Mi</div>
<div class="t" style="left:1942.5px;top:888.3px;font-size:22.4px;font-weight:400;color:#fff;letter-spacing:0px;font-family:'Liberation Sans', sans-serif;-webkit-text-stroke-width:0.35px;">(0.90%)</div>
<div class="t" style="left:2100.0px;top:861.3px;font-size:22.4px;font-weight:400;color:#fff;letter-spacing:0px;font-family:'Liberation Sans', sans-serif;-webkit-text-stroke-width:0.35px;">400.00Mi</div>
<div class="t" style="left:2100.0px;top:888.3px;font-size:22.4px;font-weight:400;color:#fff;letter-spacing:0px;font-family:'Liberation Sans', sans-serif;-webkit-text-stroke-width:0.35px;">(1.26%)</div>
<div class="t" style="left:2258.0px;top:874.8px;font-size:22.4px;font-weight:400;color:#fff;letter-spacing:0px;font-family:'Liberation Sans', sans-serif;-webkit-text-stroke-width:0.35px;">31.00Gi</div>
<div class="t" style="left:2415.5px;top:874.8px;font-size:22.4px;font-weight:400;color:#fff;letter-spacing:0px;font-family:'Liberation Sans', sans-serif;-webkit-text-stroke-width:0.35px;">5 (4.55%)</div>
<div class="t" style="left:2573.5px;top:861.3px;font-size:22.4px;font-weight:400;color:#fff;letter-spacing:0px;font-family:'Liberation Sans', sans-serif;-webkit-text-stroke-width:0.35px;text-decoration:underline dotted;text-underline-offset:2.5px;text-decoration-thickness:2px">3 hours</div>
<div class="t" style="left:2573.5px;top:888.3px;font-size:22.4px;font-weight:400;color:#fff;letter-spacing:0px;font-family:'Liberation Sans', sans-serif;-webkit-text-stroke-width:0.35px;text-decoration:underline dotted;text-underline-offset:2.5px;text-decoration-thickness:2px">ago</div>
<div class="r" style="left:2689.2px;top:873.8px;width:6.6px;height:6.6px;background:#c8c8c8;border-radius:50%"></div>
<div class="r" style="left:2689.2px;top:883.3px;width:6.6px;height:6.6px;background:#c8c8c8;border-radius:50%"></div>
<div class="r" style="left:2689.2px;top:892.8px;width:6.6px;height:6.6px;background:#c8c8c8;border-radius:50%"></div>
<div class="r" style="left:454.0px;top:1193.0px;width:2296.0px;height:1.6px;background:#474747;"></div>
<div class="r" style="left:484.4px;top:1081.2px;width:21.7px;height:21.7px;background:#008000;border-radius:50%"></div>
<div class="t" style="left:549.5px;top:1080.3px;font-size:22.4px;font-weight:400;color:#3d87f0;letter-spacing:0px;font-family:'Liberation Sans', sans-serif;-webkit-text-stroke-width:0.35px;">odroid-h4-2</div>
<div class="r" style="left:963.0px;top:995.9px;width:349.6px;height:40.6px;background:#1e1e1e;border-radius:20.3px"></div>
<div class="t" style="left:979.0px;top:1004.2px;font-size:22.4px;font-weight:400;color:#fff;letter-spacing:0px;font-family:'Liberation Sans', sans-serif;-webkit-text-stroke-width:0.35px;">beta.kubernetes.io/arch: amd64</div>
<div class="r" style="left:963.0px;top:1050.3px;width:307.7px;height:40.6px;background:#1e1e1e;border-radius:20.3px"></div>
<div class="t" style="left:979.0px;top:1058.6px;font-size:22.4px;font-weight:400;color:#fff;letter-spacing:0px;font-family:'Liberation Sans', sans-serif;-webkit-text-stroke-width:0.35px;">beta.kubernetes.io/os: linux</div>
<div class="r" style="left:963.0px;top:1104.7px;width:299.5px;height:40.6px;background:#1e1e1e;border-radius:20.3px"></div>
<div class="t" style="left:979.0px;top:1113.0px;font-size:22.4px;font-weight:400;color:#fff;letter-spacing:0px;font-family:'Liberation Sans', sans-serif;-webkit-text-stroke-width:0.35px;">kubernetes.io/arch: amd64</div>
<div class="t" style="left:979.0px;top:1161.5px;font-size:22.4px;font-weight:400;color:#3d87f0;letter-spacing:0px;font-family:'Liberation Sans', sans-serif;-webkit-text-stroke-width:0.35px;">Show all</div>
<div class="t" style="left:1376.5px;top:1080.4px;font-size:22.4px;font-weight:400;color:#fff;letter-spacing:0px;font-family:'Liberation Sans', sans-serif;-webkit-text-stroke-width:0.35px;">True</div>
<div class="t" style="left:1470.0px;top:1066.9px;font-size:22.4px;font-weight:400;color:#fff;letter-spacing:0px;font-family:'Liberation Sans', sans-serif;-webkit-text-stroke-width:0.35px;">450.00m</div>
<div class="t" style="left:1470.0px;top:1093.9px;font-size:22.4px;font-weight:400;color:#fff;letter-spacing:0px;font-family:'Liberation Sans', sans-serif;-webkit-text-stroke-width:0.35px;">(5.63%)</div>
<div class="t" style="left:1627.5px;top:1066.9px;font-size:22.4px;font-weight:400;color:#fff;letter-spacing:0px;font-family:'Liberation Sans', sans-serif;-webkit-text-stroke-width:0.35px;">250.00m</div>
<div class="t" style="left:1627.5px;top:1093.9px;font-size:22.4px;font-weight:400;color:#fff;letter-spacing:0px;font-family:'Liberation Sans', sans-serif;-webkit-text-stroke-width:0.35px;">(3.13%)</div>
<div class="t" style="left:1785.0px;top:1080.4px;font-size:22.4px;font-weight:400;color:#fff;letter-spacing:0px;font-family:'Liberation Sans', sans-serif;-webkit-text-stroke-width:0.35px;">8.00</div>
<div class="t" style="left:1942.5px;top:1066.9px;font-size:22.4px;font-weight:400;color:#fff;letter-spacing:0px;font-family:'Liberation Sans', sans-serif;-webkit-text-stroke-width:0.35px;">286.00Mi</div>
<div class="t" style="left:1942.5px;top:1093.9px;font-size:22.4px;font-weight:400;color:#fff;letter-spacing:0px;font-family:'Liberation Sans', sans-serif;-webkit-text-stroke-width:0.35px;">(0.90%)</div>
<div class="t" style="left:2100.0px;top:1066.9px;font-size:22.4px;font-weight:400;color:#fff;letter-spacing:0px;font-family:'Liberation Sans', sans-serif;-webkit-text-stroke-width:0.35px;">400.00Mi</div>
<div class="t" style="left:2100.0px;top:1093.9px;font-size:22.4px;font-weight:400;color:#fff;letter-spacing:0px;font-family:'Liberation Sans', sans-serif;-webkit-text-stroke-width:0.35px;">(1.26%)</div>
<div class="t" style="left:2258.0px;top:1080.4px;font-size:22.4px;font-weight:400;color:#fff;letter-spacing:0px;font-family:'Liberation Sans', sans-serif;-webkit-text-stroke-width:0.35px;">31.00Gi</div>
<div class="t" style="left:2415.5px;top:1080.4px;font-size:22.4px;font-weight:400;color:#fff;letter-spacing:0px;font-family:'Liberation Sans', sans-serif;-webkit-text-stroke-width:0.35px;">5 (4.55%)</div>
<div class="t" style="left:2573.5px;top:1066.9px;font-size:22.4px;font-weight:400;color:#fff;letter-spacing:0px;font-family:'Liberation Sans', sans-serif;-webkit-text-stroke-width:0.35px;text-decoration:underline dotted;text-underline-offset:2.5px;text-decoration-thickness:2px">3 hours</div>
<div class="t" style="left:2573.5px;top:1093.9px;font-size:22.4px;font-weight:400;color:#fff;letter-spacing:0px;font-family:'Liberation Sans', sans-serif;-webkit-text-stroke-width:0.35px;text-decoration:underline dotted;text-underline-offset:2.5px;text-decoration-thickness:2px">ago</div>
<div class="r" style="left:2689.2px;top:1079.4px;width:6.6px;height:6.6px;background:#c8c8c8;border-radius:50%"></div>
<div class="r" style="left:2689.2px;top:1088.9px;width:6.6px;height:6.6px;background:#c8c8c8;border-radius:50%"></div>
<div class="r" style="left:2689.2px;top:1098.4px;width:6.6px;height:6.6px;background:#c8c8c8;border-radius:50%"></div>
<div class="r" style="left:454.0px;top:1398.6px;width:2296.0px;height:1.6px;background:#474747;"></div>
<div class="r" style="left:484.4px;top:1286.8px;width:21.7px;height:21.7px;background:#008000;border-radius:50%"></div>
<div class="t" style="left:549.5px;top:1285.9px;font-size:22.4px;font-weight:400;color:#3d87f0;letter-spacing:0px;font-family:'Liberation Sans', sans-serif;-webkit-text-stroke-width:0.35px;">odroid-h4-3</div>
<div class="r" style="left:963.0px;top:1201.5px;width:349.6px;height:40.6px;background:#1e1e1e;border-radius:20.3px"></div>
<div class="t" style="left:979.0px;top:1209.8px;font-size:22.4px;font-weight:400;color:#fff;letter-spacing:0px;font-family:'Liberation Sans', sans-serif;-webkit-text-stroke-width:0.35px;">beta.kubernetes.io/arch: amd64</div>
<div class="r" style="left:963.0px;top:1255.9px;width:307.7px;height:40.6px;background:#1e1e1e;border-radius:20.3px"></div>
<div class="t" style="left:979.0px;top:1264.2px;font-size:22.4px;font-weight:400;color:#fff;letter-spacing:0px;font-family:'Liberation Sans', sans-serif;-webkit-text-stroke-width:0.35px;">beta.kubernetes.io/os: linux</div>
<div class="r" style="left:963.0px;top:1310.3px;width:299.5px;height:40.6px;background:#1e1e1e;border-radius:20.3px"></div>
<div class="t" style="left:979.0px;top:1318.6px;font-size:22.4px;font-weight:400;color:#fff;letter-spacing:0px;font-family:'Liberation Sans', sans-serif;-webkit-text-stroke-width:0.35px;">kubernetes.io/arch: amd64</div>
<div class="t" style="left:979.0px;top:1367.1px;font-size:22.4px;font-weight:400;color:#3d87f0;letter-spacing:0px;font-family:'Liberation Sans', sans-serif;-webkit-text-stroke-width:0.35px;">Show all</div>
<div class="t" style="left:1376.5px;top:1286.0px;font-size:22.4px;font-weight:400;color:#fff;letter-spacing:0px;font-family:'Liberation Sans', sans-serif;-webkit-text-stroke-width:0.35px;">True</div>
<div class="t" style="left:1470.0px;top:1272.5px;font-size:22.4px;font-weight:400;color:#fff;letter-spacing:0px;font-family:'Liberation Sans', sans-serif;-webkit-text-stroke-width:0.35px;">350.00m</div>
<div class="t" style="left:1470.0px;top:1299.5px;font-size:22.4px;font-weight:400;color:#fff;letter-spacing:0px;font-family:'Liberation Sans', sans-serif;-webkit-text-stroke-width:0.35px;">(4.38%)</div>
<div class="t" style="left:1627.5px;top:1272.5px;font-size:22.4px;font-weight:400;color:#fff;letter-spacing:0px;font-family:'Liberation Sans', sans-serif;-webkit-text-stroke-width:0.35px;">250.00m</div>
<div class="t" style="left:1627.5px;top:1299.5px;font-size:22.4px;font-weight:400;color:#fff;letter-spacing:0px;font-family:'Liberation Sans', sans-serif;-webkit-text-stroke-width:0.35px;">(3.13%)</div>
<div class="t" style="left:1785.0px;top:1286.0px;font-size:22.4px;font-weight:400;color:#fff;letter-spacing:0px;font-family:'Liberation Sans', sans-serif;-webkit-text-stroke-width:0.35px;">8.00</div>
<div class="t" style="left:1942.5px;top:1272.5px;font-size:22.4px;font-weight:400;color:#fff;letter-spacing:0px;font-family:'Liberation Sans', sans-serif;-webkit-text-stroke-width:0.35px;">216.00Mi</div>
<div class="t" style="left:1942.5px;top:1299.5px;font-size:22.4px;font-weight:400;color:#fff;letter-spacing:0px;font-family:'Liberation Sans', sans-serif;-webkit-text-stroke-width:0.35px;">(0.68%)</div>
<div class="t" style="left:2100.0px;top:1272.5px;font-size:22.4px;font-weight:400;color:#fff;letter-spacing:0px;font-family:'Liberation Sans', sans-serif;-webkit-text-stroke-width:0.35px;">400.00Mi</div>
<div class="t" style="left:2100.0px;top:1299.5px;font-size:22.4px;font-weight:400;color:#fff;letter-spacing:0px;font-family:'Liberation Sans', sans-serif;-webkit-text-stroke-width:0.35px;">(1.26%)</div>
<div class="t" style="left:2258.0px;top:1286.0px;font-size:22.4px;font-weight:400;color:#fff;letter-spacing:0px;font-family:'Liberation Sans', sans-serif;-webkit-text-stroke-width:0.35px;">31.00Gi</div>
<div class="t" style="left:2415.5px;top:1286.0px;font-size:22.4px;font-weight:400;color:#fff;letter-spacing:0px;font-family:'Liberation Sans', sans-serif;-webkit-text-stroke-width:0.35px;">4 (3.64%)</div>
<div class="t" style="left:2573.5px;top:1272.5px;font-size:22.4px;font-weight:400;color:#fff;letter-spacing:0px;font-family:'Liberation Sans', sans-serif;-webkit-text-stroke-width:0.35px;text-decoration:underline dotted;text-underline-offset:2.5px;text-decoration-thickness:2px">3 hours</div>
<div class="t" style="left:2573.5px;top:1299.5px;font-size:22.4px;font-weight:400;color:#fff;letter-spacing:0px;font-family:'Liberation Sans', sans-serif;-webkit-text-stroke-width:0.35px;text-decoration:underline dotted;text-underline-offset:2.5px;text-decoration-thickness:2px">ago</div>
<div class="r" style="left:2689.2px;top:1285.0px;width:6.6px;height:6.6px;background:#c8c8c8;border-radius:50%"></div>
<div class="r" style="left:2689.2px;top:1294.5px;width:6.6px;height:6.6px;background:#c8c8c8;border-radius:50%"></div>
<div class="r" style="left:2689.2px;top:1304.0px;width:6.6px;height:6.6px;background:#c8c8c8;border-radius:50%"></div>
<div class="r" style="left:484.4px;top:1492.4px;width:21.7px;height:21.7px;background:#008000;border-radius:50%"></div>
<div class="t" style="left:549.5px;top:1491.5px;font-size:22.4px;font-weight:400;color:#3d87f0;letter-spacing:0px;font-family:'Liberation Sans', sans-serif;-webkit-text-stroke-width:0.35px;">odroid-h4-4</div>
<div class="r" style="left:963.0px;top:1407.1px;width:349.6px;height:40.6px;background:#1e1e1e;border-radius:20.3px"></div>
<div class="t" style="left:979.0px;top:1415.4px;font-size:22.4px;font-weight:400;color:#fff;letter-spacing:0px;font-family:'Liberation Sans', sans-serif;-webkit-text-stroke-width:0.35px;">beta.kubernetes.io/arch: amd64</div>
<div class="r" style="left:963.0px;top:1461.5px;width:307.7px;height:40.6px;background:#1e1e1e;border-radius:20.3px"></div>
<div class="t" style="left:979.0px;top:1469.8px;font-size:22.4px;font-weight:400;color:#fff;letter-spacing:0px;font-family:'Liberation Sans', sans-serif;-webkit-text-stroke-width:0.35px;">beta.kubernetes.io/os: linux</div>
<div class="r" style="left:963.0px;top:1515.9px;width:299.5px;height:40.6px;background:#1e1e1e;border-radius:20.3px"></div>
<div class="t" style="left:979.0px;top:1524.2px;font-size:22.4px;font-weight:400;color:#fff;letter-spacing:0px;font-family:'Liberation Sans', sans-serif;-webkit-text-stroke-width:0.35px;">kubernetes.io/arch: amd64</div>
<div class="t" style="left:979.0px;top:1572.7px;font-size:22.4px;font-weight:400;color:#3d87f0;letter-spacing:0px;font-family:'Liberation Sans', sans-serif;-webkit-text-stroke-width:0.35px;">Show all</div>
<div class="t" style="left:1376.5px;top:1491.6px;font-size:22.4px;font-weight:400;color:#fff;letter-spacing:0px;font-family:'Liberation Sans', sans-serif;-webkit-text-stroke-width:0.35px;">True</div>
<div class="t" style="left:1470.0px;top:1478.1px;font-size:22.4px;font-weight:400;color:#fff;letter-spacing:0px;font-family:'Liberation Sans', sans-serif;-webkit-text-stroke-width:0.35px;">350.00m</div>
<div class="t" style="left:1470.0px;top:1505.1px;font-size:22.4px;font-weight:400;color:#fff;letter-spacing:0px;font-family:'Liberation Sans', sans-serif;-webkit-text-stroke-width:0.35px;">(4.38%)</div>
<div class="t" style="left:1627.5px;top:1478.1px;font-size:22.4px;font-weight:400;color:#fff;letter-spacing:0px;font-family:'Liberation Sans', sans-serif;-webkit-text-stroke-width:0.35px;">250.00m</div>
<div class="t" style="left:1627.5px;top:1505.1px;font-size:22.4px;font-weight:400;color:#fff;letter-spacing:0px;font-family:'Liberation Sans', sans-serif;-webkit-text-stroke-width:0.35px;">(3.13%)</div>
<div class="t" style="left:1785.0px;top:1491.6px;font-size:22.4px;font-weight:400;color:#fff;letter-spacing:0px;font-family:'Liberation Sans', sans-serif;-webkit-text-stroke-width:0.35px;">8.00</div>
<div class="t" style="left:1942.5px;top:1478.1px;font-size:22.4px;font-weight:400;color:#fff;letter-spacing:0px;font-family:'Liberation Sans', sans-serif;-webkit-text-stroke-width:0.35px;">216.00Mi</div>
<div class="t" style="left:1942.5px;top:1505.1px;font-size:22.4px;font-weight:400;color:#fff;letter-spacing:0px;font-family:'Liberation Sans', sans-serif;-webkit-text-stroke-width:0.35px;">(0.68%)</div>
<div class="t" style="left:2100.0px;top:1478.1px;font-size:22.4px;font-weight:400;color:#fff;letter-spacing:0px;font-family:'Liberation Sans', sans-serif;-webkit-text-stroke-width:0.35px;">400.00Mi</div>
<div class="t" style="left:2100.0px;top:1505.1px;font-size:22.4px;font-weight:400;color:#fff;letter-spacing:0px;font-family:'Liberation Sans', sans-serif;-webkit-text-stroke-width:0.35px;">(1.26%)</div>
<div class="t" style="left:2258.0px;top:1491.6px;font-size:22.4px;font-weight:400;color:#fff;letter-spacing:0px;font-family:'Liberation Sans', sans-serif;-webkit-text-stroke-width:0.35px;">31.00Gi</div>
<div class="t" style="left:2415.5px;top:1491.6px;font-size:22.4px;font-weight:400;color:#fff;letter-spacing:0px;font-family:'Liberation Sans', sans-serif;-webkit-text-stroke-width:0.35px;">5 (4.55%)</div>
<div class="t" style="left:2573.5px;top:1478.1px;font-size:22.4px;font-weight:400;color:#fff;letter-spacing:0px;font-family:'Liberation Sans', sans-serif;-webkit-text-stroke-width:0.35px;text-decoration:underline dotted;text-underline-offset:2.5px;text-decoration-thickness:2px">3 hours</div>
<div class="t" style="left:2573.5px;top:1505.1px;font-size:22.4px;font-weight:400;color:#fff;letter-spacing:0px;font-family:'Liberation Sans', sans-serif;-webkit-text-stroke-width:0.35px;text-decoration:underline dotted;text-underline-offset:2.5px;text-decoration-thickness:2px">ago</div>
<div class="r" style="left:2689.2px;top:1490.6px;width:6.6px;height:6.6px;background:#c8c8c8;border-radius:50%"></div>
<div class="r" style="left:2689.2px;top:1500.1px;width:6.6px;height:6.6px;background:#c8c8c8;border-radius:50%"></div>
<div class="r" style="left:2689.2px;top:1509.6px;width:6.6px;height:6.6px;background:#c8c8c8;border-radius:50%"></div>
<div class="t" style="left:454.0px;top:1639.1px;font-size:19.1px;font-weight:400;color:#6b6b6b;letter-spacing:0px;font-family:'Liberation Sans', sans-serif;-webkit-text-stroke-width:0.35px;">dashboard-web:1.7.0 © 2025 The Kubernetes Authors</div>
<div class="t" style="left:2314.5px;top:1639.3px;font-size:19.3px;font-weight:400;color:#6b6b6b;letter-spacing:0px;font-family:'Liberation Sans', sans-serif;-webkit-text-stroke-width:0.35px;">Documentation</div>
<div class="t" style="left:2471.5px;top:1639.3px;font-size:19.3px;font-weight:400;color:#6b6b6b;letter-spacing:0px;font-family:'Liberation Sans', sans-serif;-webkit-text-stroke-width:0.35px;">Community</div>
<div class="t" style="left:2595.5px;top:1639.3px;font-size:19.3px;font-weight:400;color:#6b6b6b;letter-spacing:0px;font-family:'Liberation Sans', sans-serif;-webkit-text-stroke-width:0.35px;">Feedback</div>
<div class="t" style="left:2703.5px;top:1639.3px;font-size:19.3px;font-weight:400;color:#6b6b6b;letter-spacing:0px;font-family:'Liberation Sans', sans-serif;-webkit-text-stroke-width:0.35px;">Slack</div>
</body></html>
